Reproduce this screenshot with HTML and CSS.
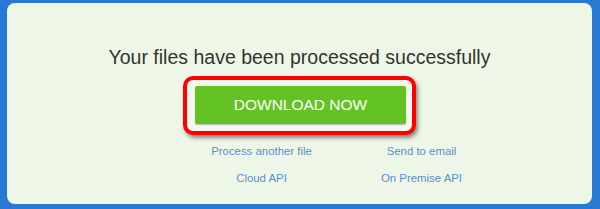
FILE: index.html
```html
<!DOCTYPE html>
<html>
<head>
<meta charset="utf-8">
<link rel="stylesheet" href="styles.css">
</head>
<body>
<div class="card">
  <h1 class="title">Your files have been processed successfully</h1>
  <div class="highlight">
    <a class="btn" href="#">DOWNLOAD NOW</a>
  </div>
  <div class="links">
    <a href="#">Process another file</a>
    <a href="#">Send to email</a>
    <a href="#">Cloud API</a>
    <a href="#">On Premise API</a>
  </div>
</div>
</body>
</html>
```
FILE: styles.css
```css
html, body {
  margin: 0;
  padding: 0;
}
body {
  background: #2a78d6;
  width: 600px;
  height: 209px;
  overflow: hidden;
  font-family: "Liberation Sans", Arial, sans-serif;
}
.card {
  margin: 3px 8px 0 7px;
  height: 201px;
  box-sizing: border-box;
  background: #eef7e7;
  border-radius: 8px;
  display: flex;
  flex-direction: column;
  align-items: center;
  padding-top: 42px;
}
.title {
  margin: 0;
  font-size: 19.5px;
  line-height: 24px;
  font-weight: normal;
  color: #333333;
}
.highlight {
  margin-top: 7px;
  border: 4px solid #ff0000;
  border-radius: 10px;
  padding: 6px 6px 7px 8px;
  box-shadow: 2px 3px 4px rgba(0,0,0,0.45);
  background: #f3f7f0;
}
.btn {
  display: block;
  width: 211px;
  height: 38px;
  line-height: 38px;
  background: #62c322;
  color: #ffffff;
  text-align: center;
  text-decoration: none;
  font-size: 15.5px;
  border-radius: 2px;
  box-shadow: 0 1px 1px rgba(0,0,0,0.25);
}
.links {
  margin-top: 8px;
  margin-left: 84px;
  display: grid;
  grid-template-columns: 160px 160px;
  grid-auto-rows: 27px;
}
.links a {
  text-align: center;
  color: #5a8fd0;
  text-decoration: none;
  font-size: 11.4px;
  line-height: 16px;
}
```
